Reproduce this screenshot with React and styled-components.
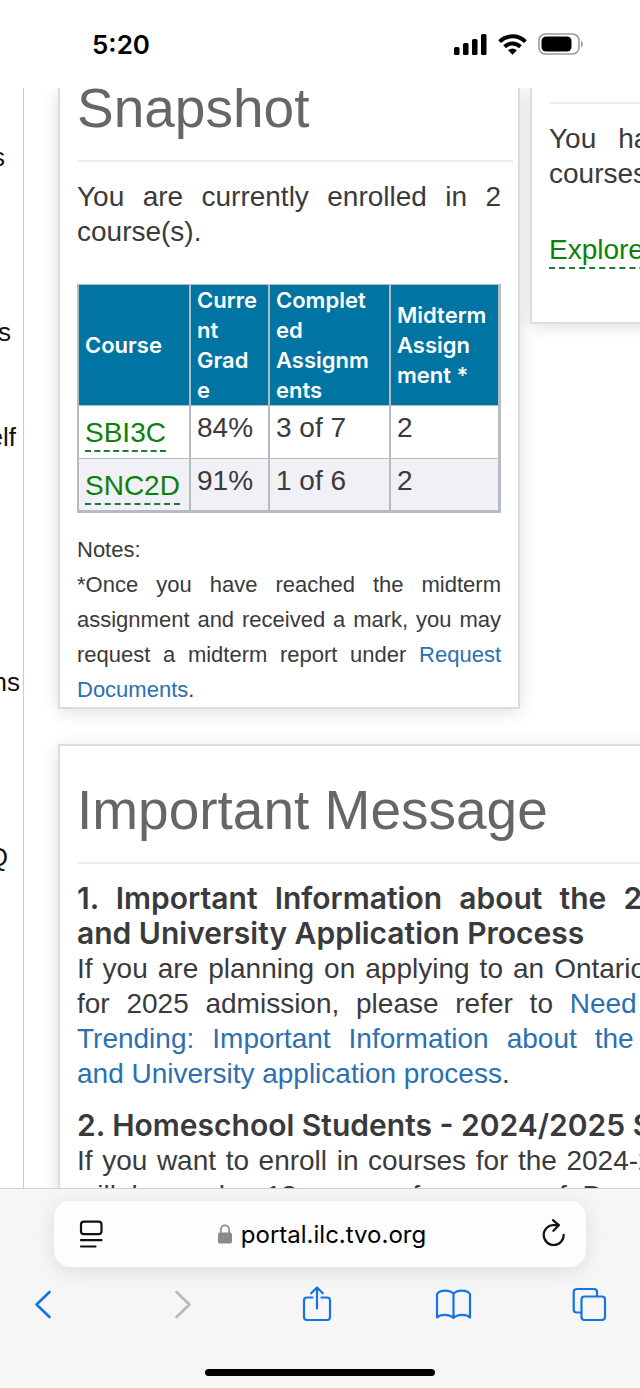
import React from 'react';
import styled, { createGlobalStyle } from 'styled-components';

const GlobalStyle = createGlobalStyle`
    * {
        box-sizing: border-box;
    }
    body {
        margin: 0;
        background: #fff;
        color: #3a3a3c;
        font-family: "Liberation Sans", Arial, sans-serif;
        font-size: 28px;
        line-height: 35px;
    }
    button {
        border: none;
        background: none;
        padding: 0;
        font: inherit;
        color: inherit;
        cursor: pointer;
    }
    svg {
        display: block;
    }
`;

const Phone = styled.div`
    display: grid;
    grid-template-rows: auto 1fr auto;
    height: 100vh;
    overflow: hidden;
`;

/* ---- status bar ---- */

const StatusBar = styled.header`
    display: flex;
    justify-content: space-between;
    align-items: center;
    height: 88px;
    padding: 0 56px 0 92px;
    color: #000;
`;

const Time = styled.span`
    font-family: Inter, sans-serif;
    font-size: 26px;
    font-weight: 600;
`;

const StatusIcons = styled.div`
    display: flex;
    align-items: center;
    gap: 11px;
`;

/* ---- web page ---- */

const Page = styled.div`
    display: flex;
    min-height: 0;
    overflow: hidden;
`;

const SideNav = styled.nav`
    flex: 0 0 24px;
    padding-top: 17px;
    border-right: 1px solid #ccc;
    overflow: hidden;
`;

const NavItem = styled.a`
    display: flex;
    justify-content: flex-end;
    align-items: flex-end;
    height: ${({ $lines }) => $lines * 35}px;
    padding-right: ${({ $end }) => $end}px;
    color: #111;
    font-size: 26px;
    text-decoration: none;
`;

const Cards = styled.main`
    flex: 1 0 822px;
    display: grid;
    grid-template-columns: minmax(0, 462fr) minmax(0, 316fr);
    align-content: start;
    align-items: start;
    gap: 35px 10px;
    padding-left: 34px;
    isolation: isolate;
`;

const Card = styled.section`
    position: relative;
    grid-column: ${({ $wide }) => ($wide ? '1 / -1' : 'auto')};
    padding: ${({ $wide }) => ($wide ? 44 : 0)}px 5px 0 17px;
    background: #fff;
    border: 2px solid #dcdcdc;
    border-top-width: ${({ $wide }) => ($wide ? 2 : 0)}px;

    /* shadow sits under every card, not only under this one */
    &::before {
        content: "";
        position: absolute;
        inset: 0;
        z-index: -1;
        box-shadow: 0 3px 18px rgba(0, 0, 0, 0.16);
    }
`;

const CardTitle = styled.h2`
    margin: 0;
    padding-bottom: 32px;
    border-bottom: 2px solid #ececec;
    color: #666;
    font-size: 55px;
    font-weight: 400;
    line-height: 40px;
`;

const Rule = styled.hr`
    margin: 14px 0 0;
    border: none;
    border-top: 2px solid #ececec;
`;

const CardBody = styled.div`
    padding-right: 12px;
    text-align: justify;
`;

const Text = styled.p`
    margin: 0;
    padding-top: 17px;
    font-size: ${({ $small }) => ($small ? 22 : 28)}px;
`;

const Subject = styled.strong`
    display: block;
    font-family: Inter, sans-serif;
    font-size: 30px;
    font-weight: 600;
`;

const TextLink = styled.a`
    color: #2a70b2;
    text-decoration: none;
`;

const DashedLink = styled.a`
    display: inline-block;
    border-bottom: 2px dashed #1d7a35;
    color: #0a820a;
    text-decoration: none;
`;

const Explore = styled.div`
    padding: 41px 0 53px;
    white-space: nowrap;
`;

const GradeTable = styled.table`
    width: 100%;
    margin: 35px 0 2px;
    border-collapse: collapse;
    border: solid #b4bcc2;
    border-width: 1px 3px 3px 2px;
    table-layout: fixed;
    text-align: left;

    th, td {
        border: solid #b4bcc2;
        border-width: 1px 2px;
    }
`;

const HeadCell = styled.th`
    width: ${({ $width }) => $width};
    height: 120px;
    padding: 0 0 0 6px;
    background: #0075a3;
    color: #fff;
    font-family: Inter, sans-serif;
    font-size: 22px;
    font-weight: 600;
    line-height: 30px;
    white-space: pre;
`;

const Row = styled.tr`
    background: ${({ $shaded }) => ($shaded ? '#f0f0f6' : '#fff')};
`;

const CourseCell = styled.th`
    height: 53px;
    padding: 9px 0 4px 6px;
    font-weight: 400;
    vertical-align: top;
`;

const Cell = styled.td`
    padding: 4px 0 0 6px;
    vertical-align: top;
`;

/* ---- browser chrome ---- */

const BrowserBar = styled.footer`
    position: relative;
    display: flex;
    flex-direction: column;
    padding: 12px 0;
    background: #f6f6f6;
    border-top: 1px solid #d2d2d2;
`;

const AddressBar = styled.div`
    display: flex;
    align-items: center;
    justify-content: space-between;
    height: 66px;
    margin: 0 54px;
    padding: 0 20px 0 24px;
    background: #fdfdfd;
    border-radius: 16px;
    box-shadow: 0 4px 22px rgba(0, 0, 0, 0.1);
    color: #000;
`;

const Address = styled.button`
    display: flex;
    align-items: center;
    gap: 9px;
    font-family: Inter, sans-serif;
    font-size: 24px;
`;

const Toolbar = styled.div`
    display: flex;
    justify-content: space-between;
    margin-top: 15px;
    padding: 0 29px 0 21px;
`;

const ToolButton = styled.button`
    width: 44px;
    height: 44px;
    color: ${({ disabled }) => (disabled ? '#b9b9bb' : '#1673e6')};
`;

const HomeIndicator = styled.div`
    align-self: center;
    width: 36%;
    height: 7px;
    margin-top: 43px;
    background: #000;
    border-radius: 4px;
`;

const navItems = [
    { text: 's', lines: 2, end: 18 },
    { text: 's', lines: 5, end: 12 },
    { text: 'elf', lines: 3, end: 7 },
    { text: 'ns', lines: 7, end: 3 },
    { text: 'Q', lines: 5, end: 15 },
];

const columns = [
    { label: 'Course', width: '112px' },
    { label: 'Curre\nnt\nGrad\ne', width: '79px' },
    { label: 'Complet\ned\nAssignm\nents', width: '121px' },
    { label: 'Midterm\nAssign\nment *', width: 'auto' },
];

const courses = [
    { code: 'SBI3C', grade: '84%', completed: '3 of 7', midterm: '2' },
    { code: 'SNC2D', grade: '91%', completed: '1 of 6', midterm: '2' },
];

const ToolIcon = ({ children }) => (
    <svg width="44" height="44" viewBox="0 0 44 44" fill="none" stroke="currentColor" strokeWidth="2.2" strokeLinecap="round" strokeLinejoin="round" aria-hidden="true">
        {children}
    </svg>
);

const SignalIcon = () => (
    <svg width="33" height="21" viewBox="0 0 33 21" aria-hidden="true">
        <rect x="0" y="13" width="5.5" height="8" rx="1.5" />
        <rect x="9" y="9" width="5.5" height="12" rx="1.5" />
        <rect x="18" y="5" width="5.5" height="16" rx="1.5" />
        <rect x="27" y="0" width="5.5" height="21" rx="1.5" />
    </svg>
);

const WifiIcon = () => (
    <svg width="29" height="21" viewBox="0 0 29 21" fill="none" stroke="#000" strokeWidth="4" aria-hidden="true">
        <path d="M1.6 7.6A18.4 18.4 0 0 1 27.4 7.6" />
        <path d="M6.6 12.7A11.3 11.3 0 0 1 22.4 12.7" />
        <path d="M14.5 20.8L10.1 16.2A6.3 6.3 0 0 1 18.9 16.2Z" fill="#000" stroke="none" />
    </svg>
);

const BatteryIcon = () => (
    <svg width="46" height="22" viewBox="0 0 46 22" aria-hidden="true">
        <rect x="1" y="1" width="40" height="20" rx="6.5" fill="none" stroke="#9a9a9a" strokeWidth="1.6" />
        <rect x="3.5" y="3.5" width="30" height="15" rx="4.5" />
        <path d="M43 8v6.4c2.4-1 2.4-5.4 0-6.4z" fill="#9a9a9a" />
    </svg>
);

const ReaderIcon = () => (
    <svg width="26" height="30" viewBox="0 0 26 30" fill="none" stroke="#111" strokeWidth="2.2" strokeLinecap="round" aria-hidden="true">
        <rect x="3" y="2.6" width="20.5" height="12.6" rx="3" />
        <path d="M3 21.2H23.5M3 27.5H17.5" />
    </svg>
);

const LockIcon = () => (
    <svg width="14" height="20" viewBox="0 0 14 20" aria-hidden="true">
        <rect x="0" y="8.5" width="14" height="11" rx="2" fill="#8a8a8c" />
        <path d="M2.9 9V5.5a4.1 4.1 0 0 1 8.2 0V9" fill="none" stroke="#8a8a8c" strokeWidth="1.7" />
    </svg>
);

const ReloadIcon = () => (
    <svg width="26" height="30" viewBox="0 0 26 30" fill="none" stroke="#111" strokeWidth="2.2" strokeLinecap="round" strokeLinejoin="round" aria-hidden="true">
        <path d="M23.7 15.8A10 10 0 1 1 13.7 6L18.5 6.2" />
        <path d="M13 1.2L18.8 6.2L13.4 11.8" />
    </svg>
);

export default function App() {
    return (
        <Phone>
            <GlobalStyle />
            <StatusBar>
                <Time>5:20</Time>
                <StatusIcons>
                    <SignalIcon />
                    <WifiIcon />
                    <BatteryIcon />
                </StatusIcons>
            </StatusBar>

            <Page>
                <SideNav>
                    {navItems.map((item, i) => (
                        <NavItem key={i} href="#" $lines={item.lines} $end={item.end}>{item.text}</NavItem>
                    ))}
                </SideNav>
                <Cards>
                    <Card>
                        <CardTitle>Snapshot</CardTitle>
                        <CardBody>
                            <Text>You are currently enrolled in 2 course(s).</Text>
                            <GradeTable>
                                <thead>
                                    <tr>
                                        {columns.map(col => (
                                            <HeadCell key={col.label} scope="col" $width={col.width}>{col.label}</HeadCell>
                                        ))}
                                    </tr>
                                </thead>
                                <tbody>
                                    {courses.map((course, i) => (
                                        <Row key={course.code} $shaded={i % 2 === 1}>
                                            <CourseCell scope="row"><DashedLink href="#">{course.code}</DashedLink></CourseCell>
                                            <Cell>{course.grade}</Cell>
                                            <Cell>{course.completed}</Cell>
                                            <Cell>{course.midterm}</Cell>
                                        </Row>
                                    ))}
                                </tbody>
                            </GradeTable>
                            <Text $small>
                                Notes:<br />
                                *Once you have reached the midterm assignment and received a mark, you may
                                request a midterm report under <TextLink href="#">Request Documents</TextLink>.
                            </Text>
                        </CardBody>
                    </Card>

                    <Card>
                        <Rule />
                        <CardBody>
                            <Text>You have no active courses</Text>
                            <Explore><DashedLink href="#">Explore Courses</DashedLink></Explore>
                        </CardBody>
                    </Card>

                    <Card $wide>
                        <CardTitle>Important Message</CardTitle>
                        <CardBody>
                            <Text>
                                <Subject>1. Important Information about the 2025 College and&nbsp;University Application Process</Subject>
                                If you are planning on applying to an Ontario college or uni for 2025 admission, please
                                refer to <TextLink href="#">Need to Know and Trending: Important Information about the
                                2025 College and&nbsp;University application process</TextLink>.
                            </Text>
                            <Text>
                                <Subject>2. Homeschool Students - 2024/2025 School Year</Subject>
                                If you want to enroll in courses for the 2024-2025 year, and
                                will be under 18 years of age as of December 31, you require a parent
                            </Text>
                        </CardBody>
                    </Card>
                </Cards>
            </Page>

            <BrowserBar>
                <AddressBar>
                    <button type="button" aria-label="Page menu"><ReaderIcon /></button>
                    <Address type="button">
                        <LockIcon />
                        portal.ilc.tvo.org
                    </Address>
                    <button type="button" aria-label="Reload"><ReloadIcon /></button>
                </AddressBar>
                <Toolbar>
                    <ToolButton type="button" aria-label="Back">
                        <ToolIcon><path d="M28.5 10L15.5 22.5L28.5 35" strokeWidth="2.6" /></ToolIcon>
                    </ToolButton>
                    <ToolButton type="button" aria-label="Forward" disabled>
                        <ToolIcon><path d="M18.5 10L31.5 22.5L18.5 35" strokeWidth="2.6" /></ToolIcon>
                    </ToolButton>
                    <ToolButton type="button" aria-label="Share">
                        <ToolIcon>
                            <path d="M18.5 15.5H13a3 3 0 0 0-3 3V35a3 3 0 0 0 3 3H33a3 3 0 0 0 3-3V18.5a3 3 0 0 0-3-3H27.5" />
                            <path d="M23 26.5V5.5M17.2 11.3L23 5.5L28.8 11.3" />
                        </ToolIcon>
                    </ToolButton>
                    <ToolButton type="button" aria-label="Bookmarks">
                        <ToolIcon>
                            <path d="M22.5 12C19.5 7.5 9 7.5 6 12V35.5C9.5 32 18.5 32 22.5 36C26.5 32 35.5 32 39 35.5V12C36 7.5 25.5 7.5 22.5 12V36" />
                        </ToolIcon>
                    </ToolButton>
                    <ToolButton type="button" aria-label="Tabs">
                        <ToolIcon>
                            <path d="M14 30.5H9.7a3 3 0 0 1-3-3V10a3 3 0 0 1 3-3H27a3 3 0 0 1 3 3V14" />
                            <rect x="14.5" y="14.5" width="23.5" height="23.5" rx="3" />
                        </ToolIcon>
                    </ToolButton>
                </Toolbar>
                <HomeIndicator />
            </BrowserBar>
        </Phone>
    );
}
